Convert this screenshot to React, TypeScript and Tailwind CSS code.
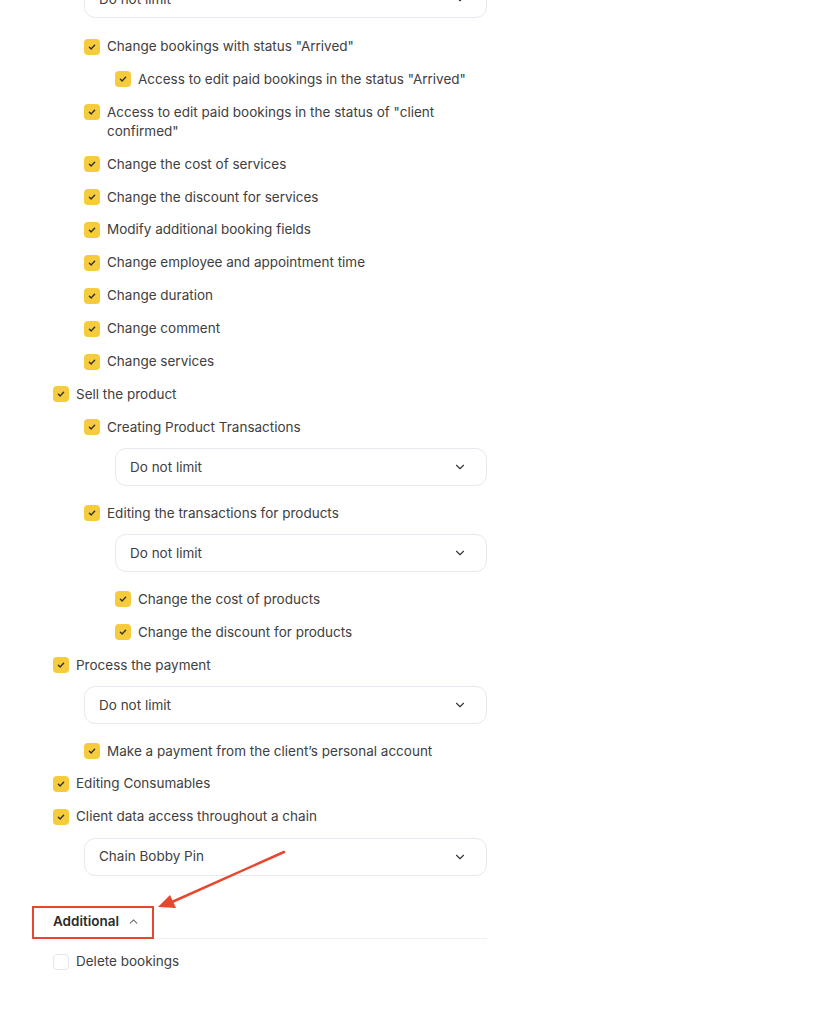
import { ChevronDown, ChevronUp } from "lucide-react"

type Row =
  | { kind: "check"; label: string; level: number; checked?: boolean }
  | { kind: "select"; value: string; level: number }

const rows: Row[] = [
  { kind: "check", label: 'Change bookings with status "Arrived"', level: 1 },
  { kind: "check", label: 'Access to edit paid bookings in the status "Arrived"', level: 2 },
  { kind: "check", label: 'Access to edit paid bookings in the status of "client confirmed"', level: 1 },
  { kind: "check", label: "Change the cost of services", level: 1 },
  { kind: "check", label: "Change the discount for services", level: 1 },
  { kind: "check", label: "Modify additional booking fields", level: 1 },
  { kind: "check", label: "Change employee and appointment time", level: 1 },
  { kind: "check", label: "Change duration", level: 1 },
  { kind: "check", label: "Change comment", level: 1 },
  { kind: "check", label: "Change services", level: 1 },
  { kind: "check", label: "Sell the product", level: 0 },
  { kind: "check", label: "Creating Product Transactions", level: 1 },
  { kind: "select", value: "Do not limit", level: 2 },
  { kind: "check", label: "Editing the transactions for products", level: 1 },
  { kind: "select", value: "Do not limit", level: 2 },
  { kind: "check", label: "Change the cost of products", level: 2 },
  { kind: "check", label: "Change the discount for products", level: 2 },
  { kind: "check", label: "Process the payment", level: 0 },
  { kind: "select", value: "Do not limit", level: 1 },
  { kind: "check", label: "Make a payment from the client’s personal account", level: 1 },
  { kind: "check", label: "Editing Consumables", level: 0 },
  { kind: "check", label: "Client data access throughout a chain", level: 0 },
  { kind: "select", value: "Chain Bobby Pin", level: 1 },
]

const indent = ["pl-0", "pl-[31px]", "pl-[62px]"]

function Checkbox({ checked = true }: { checked?: boolean }) {
  if (!checked) {
    return <span className="mt-[1.5px] h-4 w-4 shrink-0 rounded-[4px] border border-[#e3e5ec] bg-white" />
  }
  return (
    <span className="mt-[1.5px] flex h-4 w-4 shrink-0 items-center justify-center rounded-[4px] bg-[#f6cc3c]">
      <svg width="10" height="10" viewBox="0 0 10 10" fill="none">
        <path d="M2.4 5.2 4.2 6.9 7.6 3.2" stroke="#2b2b2b" strokeWidth="1.4" strokeLinecap="round" strokeLinejoin="round" />
      </svg>
    </span>
  )
}

function Select({ value }: { value: string }) {
  return (
    <div className="flex h-[38px] items-center justify-between rounded-[11px] border border-[#e8e9f0] bg-white pl-[14px] pr-[19px]">
      <span>{value}</span>
      <ChevronDown size={14} strokeWidth={2} className="text-[#3b3b3b]" />
    </div>
  )
}

export default function App() {
  return (
    <div className="relative min-h-[1024px] w-[830px] overflow-hidden bg-white font-['Inter',sans-serif] text-[13.5px] leading-[19px] text-[#404040]">
      <div className="ml-[53px] w-[434px]">
        {/* top select, partly above the viewport */}
        <div className="mt-[-20px] mb-[19px] pl-[31px]">
          <Select value="Do not limit" />
        </div>
        <div className="flex flex-col gap-[13.9px]">
          {rows.map((r, i) =>
            r.kind === "check" ? (
              <label key={i} className={`flex items-start gap-[7px] ${indent[r.level]}`}>
                <Checkbox checked={r.checked ?? true} />
                <span>{r.label}</span>
              </label>
            ) : (
              <div key={i} className={`mt-[-2.4px] mb-[3.6px] ${indent[r.level]}`}>
                <Select value={r.value} />
              </div>
            )
          )}
        </div>

        <div className="mt-[26px] flex h-[34px] items-center gap-[8px] border-b border-[#eef0f5]">
          <span className="font-semibold text-[#2b2b2b]">Additional</span>
          <ChevronUp size={13} strokeWidth={2} className="text-[#707070]" />
        </div>
        <label className="mt-[13px] flex items-start gap-[7px]">
          <Checkbox checked={false} />
          <span>Delete bookings</span>
        </label>
      </div>

      {/* annotation */}
      <div className="absolute left-[32px] top-[906px] h-[33px] w-[122px] border-2 border-[#e8472f]" />
      <svg className="absolute left-0 top-0" width="830" height="1024" viewBox="0 0 830 1024" fill="none">
        <path d="M284 852 L172 902" stroke="#e8472f" strokeWidth="2.5" strokeLinecap="round" />
        <path d="M158 907 L170 895 L176 908 Z" fill="#e8472f" />
      </svg>
    </div>
  )
}
